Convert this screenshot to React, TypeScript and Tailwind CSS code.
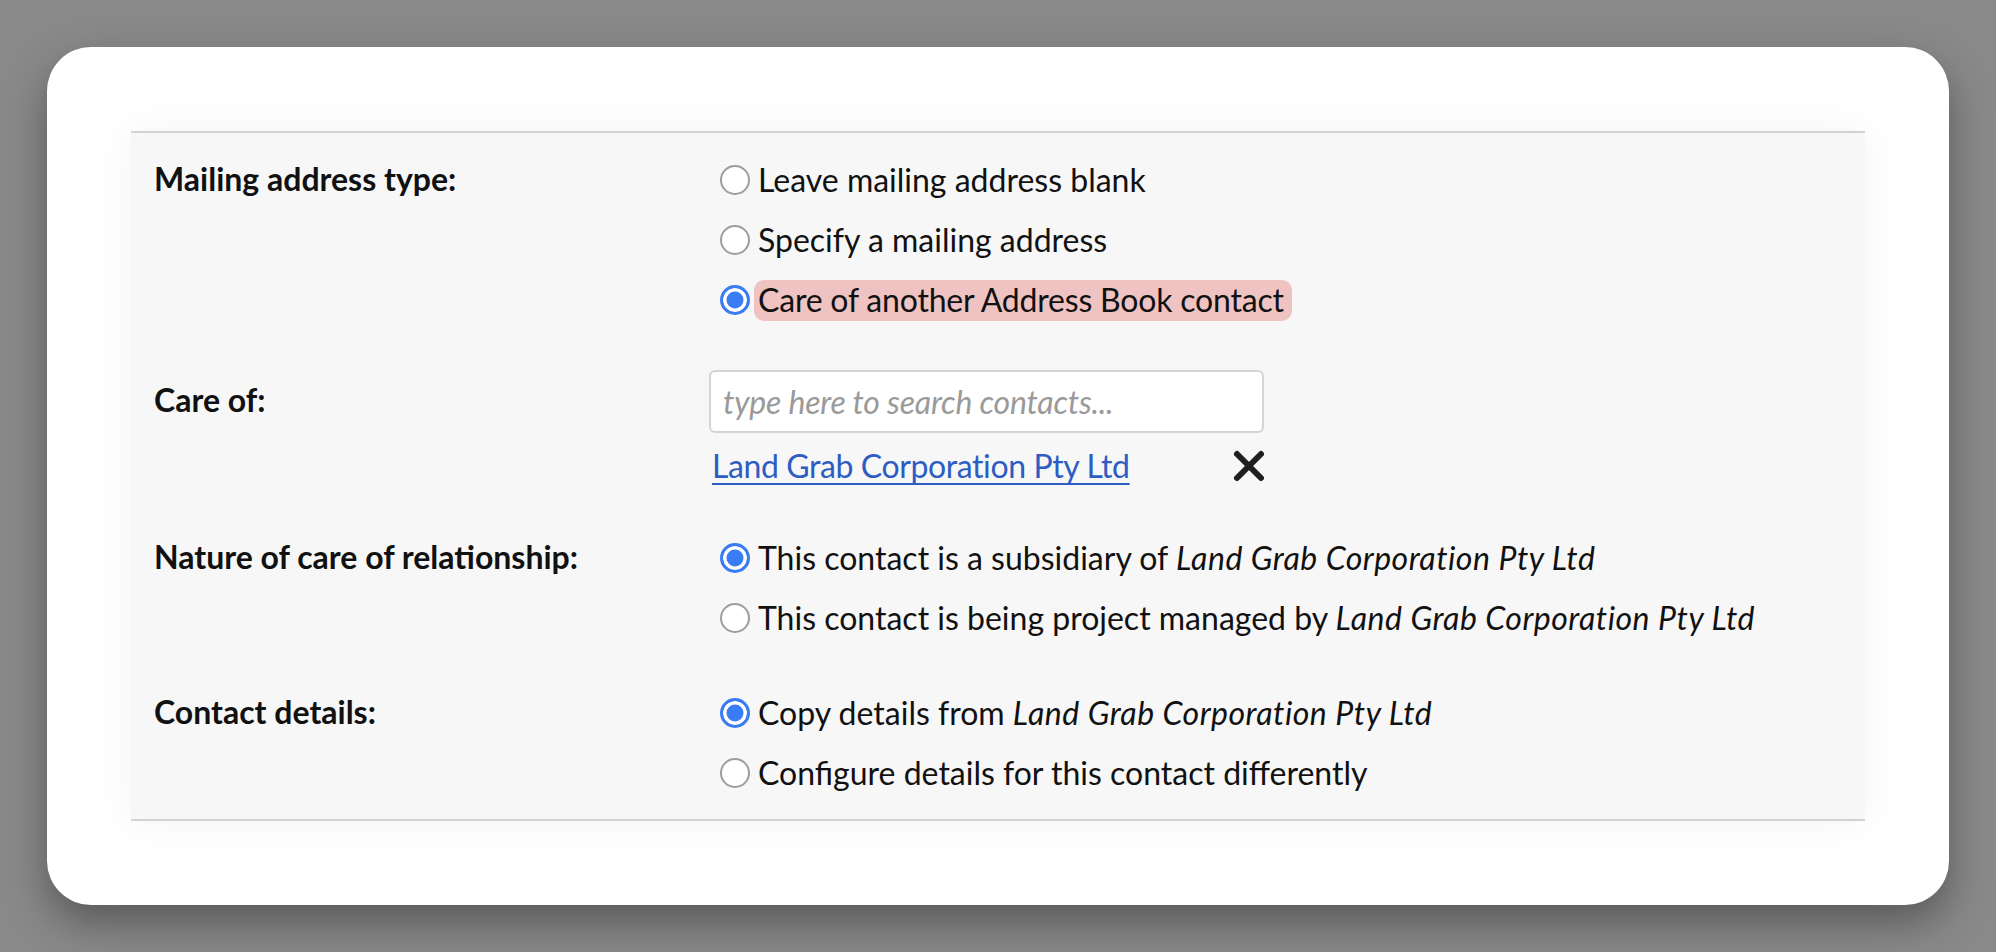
import { ReactNode } from 'react';

interface OptionProps {
    name: string;
    checked?: boolean;
    highlight?: boolean;
    children: ReactNode;
}

function Option({ name, checked, highlight, children }: OptionProps) {
    return (
        <label className="flex items-center h-[60px] cursor-pointer">
            <input
                type="radio"
                name={name}
                defaultChecked={checked}
                className="appearance-none shrink-0 ml-[11px] w-[30px] h-[30px] rounded-full border-[2.5px] border-[#9c9ca4] bg-white checked:border-[3px] checked:border-[#3a7cf4] checked:bg-[#3a7cf4] checked:shadow-[inset_0_0_0_3.5px_#ffffff]"
            />
            {highlight ? (
                <span className="ml-[4px] pl-[4px] pr-[8px] h-[41px] flex items-center rounded-[10px] bg-[#f0c3c3] tracking-[-0.2px]">{children}</span>
            ) : (
                <span className="ml-[8px]">{children}</span>
            )}
        </label>
    );
}

function FieldLabel({ children }: { children: ReactNode }) {
    return (
        <div className="w-[555px] shrink-0 h-[60px] flex items-center pb-[3px] font-bold">{children}</div>
    );
}

const company = 'Land Grab Corporation Pty Ltd';

function Company() {
    return <i className="tracking-[0.5px]">{company}</i>;
}

export default function App() {
    return (
        <div className="h-[952px] bg-[#898989] p-[47px] font-['Lato',sans-serif] text-[32px] text-[#111]">
            <div className="h-full bg-white rounded-[44px] p-[84px] shadow-[0_18px_40px_rgba(0,0,0,0.35)]">
                <div className="h-full bg-[#f7f7f7] border-y-2 border-[#d2d2d2] shadow-[0_0_40px_rgba(0,0,0,0.05)] pl-[23px] pt-[17px]">
                    {/* Mailing address type */}
                    <div className="flex">
                        <FieldLabel>Mailing address type:</FieldLabel>
                        <div className="flex flex-col">
                            <Option name="mailing">Leave mailing address blank</Option>
                            <Option name="mailing">Specify a mailing address</Option>
                            <Option name="mailing" checked highlight>Care of another Address Book contact</Option>
                        </div>
                    </div>

                    {/* Care of */}
                    <div className="flex mt-[40px]">
                        <div className="w-[555px] shrink-0 h-[63px] flex items-center pb-[3px] font-bold">Care of:</div>
                        <div className="flex flex-col w-[555px]">
                            <input
                                type="text"
                                placeholder="type here to search contacts..."
                                className="h-[63px] w-full bg-white border-[2.5px] border-[#d4d4d4] rounded-[6px] px-[12px] outline-none placeholder:italic placeholder:text-[#9a9a9a] placeholder:tracking-[-0.2px]"
                            />
                            <div className="mt-[10px] h-[46px] flex items-center justify-between pl-[3px]">
                                <a href="#" className="text-[#2d5dc2] underline decoration-[2px] underline-offset-[5px] tracking-[-0.4px]">{company}</a>
                                <button className="mr-[-2px]" aria-label="Remove">
                                    <svg width="34" height="34" viewBox="0 0 34 34">
                                        <path d="M5 5L29 29M29 5L5 29" stroke="#1f1f1f" strokeWidth="6" strokeLinecap="round" />
                                    </svg>
                                </button>
                            </div>
                        </div>
                    </div>

                    {/* Nature of care of relationship */}
                    <div className="flex mt-[39px]">
                        <FieldLabel>Nature of care of relationship:</FieldLabel>
                        <div className="flex flex-col">
                            <Option name="nature" checked>This contact is a subsidiary of&nbsp;<Company /></Option>
                            <Option name="nature">This contact is being project managed by&nbsp;<Company /></Option>
                        </div>
                    </div>

                    {/* Contact details */}
                    <div className="flex mt-[35px]">
                        <FieldLabel>Contact details:</FieldLabel>
                        <div className="flex flex-col">
                            <Option name="details" checked>Copy details from&nbsp;<Company /></Option>
                            <Option name="details">Configure details for this contact differently</Option>
                        </div>
                    </div>
                </div>
            </div>
        </div>
    );
}
